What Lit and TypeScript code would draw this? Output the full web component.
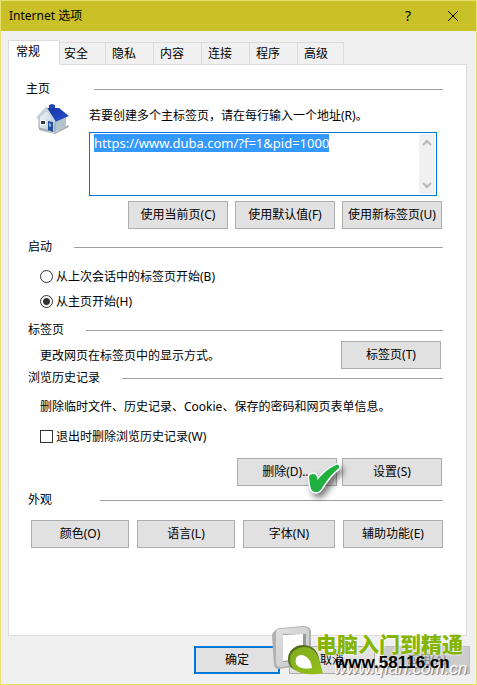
import { LitElement, html, css, svg } from "lit";
import { customElement, query } from "lit/decorators.js";

const TABS = ["常规", "安全", "隐私", "内容", "连接", "程序", "高级"];

const houseIcon = svg`
  <svg class="house" viewBox="0 0 34 32" aria-hidden="true">
    <defs>
      <linearGradient id="wall" x1="0" y1="0" x2="1" y2="1">
        <stop offset="0" stop-color="#f6fafd" /><stop offset="1" stop-color="#b4c6d2" />
      </linearGradient>
      <linearGradient id="roof" x1="0" y1="0" x2="1" y2="1">
        <stop offset="0" stop-color="#1636a4" /><stop offset="1" stop-color="#2450cc" />
      </linearGradient>
    </defs>
    <path d="M3 25l15 5 14-8 1 2-14 7L3 27z" fill="#a9adb0" />
    <path d="M17 18L30 13v11l-12 5z" fill="#b4c4ce" />
    <path d="M3 14l8-7 8 12v10L3 25z" fill="url(#wall)" stroke="#93a5b0" stroke-width="1" />
    <path d="M13 2l3-1 3 1v5h-6z" fill="#1d48b0" />
    <path d="M10 5l13 0 10 8-14 6z" fill="url(#roof)" />
    <path d="M1 15L10 5l9 14" fill="none" stroke="#c6d4de" stroke-width="2" />
    <path d="M4 17h6v5H4z" fill="#f4f8fa" />
    <path d="M5 18h4v3H5z" fill="#35393e" />
    <path d="M12 18l5 1v10l-5-2z" fill="#24529c" />
    <path d="M13 20l2 1v3l-2-1z" fill="#8fb5df" />
  </svg>`;

const tickIcon = svg`
  <svg class="tick" viewBox="0 0 44 44" aria-hidden="true">
    <path d="M5 20q0-3 5-3 3 0 3.500 6Q21 13 32 8q4-1 3 3Q26 18 18 31q-3 5-7 4-4 0-5-7z"
      fill="#1fb040" stroke="#fff" stroke-width="3" paint-order="stroke" stroke-linejoin="round" />
  </svg>`;

const logoIcon = svg`
  <svg class="logo" viewBox="0 0 54 52" aria-hidden="true">
    <defs>
      <linearGradient id="frame" x1="0" y1="0" x2="1" y2="1">
        <stop offset="0" stop-color="#e0e0e0" /><stop offset="1" stop-color="#c6c6c6" />
      </linearGradient>
      <linearGradient id="leaf" x1="0" y1="0" x2="1" y2="1">
        <stop offset="0" stop-color="#82aa22" /><stop offset="1" stop-color="#94c01a" />
      </linearGradient>
    </defs>
    <path fill="#b0b0b0" d="M4 4q1-2 5-2L31 0q7 0 8 5v29q0 4-5 5L7 43q-4 0-5-4L0 10q0-4 4-6z" />
    <path fill="url(#frame)" d="M7 3L31 1q6 0 6 5v28q0 4-4 4L9 41q-5 0-5-4V8q0-5 3-5z" />
    <path fill="#999" d="M11 8h23v26l-23 2z" />
    <path fill="#fff" d="M11 9l20-1v25l-20 2z" />
    <path fill="#536f1c" d="M16 33q0-9 9-13 9-3 16 2 5 4 6 11l3 13-27-2q-7-3-7-11z" />
    <path fill="url(#leaf)" d="M18 34q0-9 9-12 8-3 14 2 5 4 6 11l4 12q-7 2-15 1-17-1-18-14z" />
    <path fill="#fff" d="M24 32q3-5 9-2 6 3 7 12-6 1-10 0-8-2-6-10z" />
  </svg>`;

@customElement("app-root")
export class InternetOptions extends LitElement {
  @query("textarea") private address!: HTMLTextAreaElement;

  static styles = css`
    :host {
      display: block;
      font: 12px/16px "Noto Sans", "Noto Sans CJK SC", sans-serif;
      color: #000;
    }
    *, *::before, *::after { box-sizing: border-box; }
    button, textarea { font: inherit; color: inherit; margin: 0; }
    .dialog {
      min-height: 100vh;
      display: flex;
      flex-direction: column;
      background: #f0f0f0;
      border: 1px solid #e8e06c;
    }
    .titlebar {
      height: 30px;
      display: flex;
      align-items: center;
      background: #cac028;
      padding: 0 9px 0 8px;
      flex: none;
    }
    .title { flex: 1; margin: 0; font-size: 12px; font-weight: 400; }
    .caption {
      width: 28px;
      height: 28px;
      padding: 0;
      margin-left: 17px;
      border: 0;
      background: none;
      display: grid;
      place-items: center;
      font-size: 14px;
    }
    .caption svg { width: 12px; height: 12px; }
    .content { padding: 9px 9px 10px 7px; flex: 1; display: flex; flex-direction: column; }
    .tabs { display: flex; align-items: flex-end; height: 25px; margin-bottom: -1px; }
    .tab {
      height: 23px;
      width: 48px;
      padding: 0 0 0 6px;
      background: #f0f0f0;
      border: 1px solid #dcdcdc;
      border-left: 0;
      text-align: left;
    }
    .tab.active {
      width: 52px;
      height: 25px;
      background: #fff;
      border-left: 1px solid #dcdcdc;
      border-bottom-color: #fff;
      padding: 0 0 2px 7px;
      z-index: 1;
    }
    .tab.active + .tab, .tab:last-child { width: 46px; }
    .tab.active + .tab { padding-left: 4px; }
    .panel {
      flex: 1;
      background: #fff;
      border: 1px solid #dcdcdc;
      padding: 16px 23px 0 19px;
    }
    .legend { display: flex; align-items: center; gap: 22px; height: 16px; margin: 0; font-size: 12px; font-weight: 400; }
    .legend::after { content: ""; flex: 1; height: 1px; background: #a0a0a0; }
    .legend.wide { gap: 48px; }
    .legend.first { gap: 44px; margin-left: -2px; }
    .home { display: grid; grid-template-columns: 61px 1fr; margin: 6px 6px 0 0; }
    .house { width: 34px; height: 32px; margin-left: 8px; }
    .home label { display: block; height: 29px; padding-top: 5px; white-space: nowrap; }
    .editor { display: flex; height: 64px; border: 1px solid #0078d7; padding: 1px; }
    .editor textarea {
      flex: 1;
      min-width: 0;
      border: 0;
      outline: 0;
      padding: 1px 3px;
      resize: none;
      overflow: hidden;
      background: #fff;
      font-size: 13px;
      line-height: 17px;
    }
    .editor textarea::selection { background: #3399ff; color: #fff; }
    .scroller { width: 16px; background: #f0f0f0; display: flex; flex-direction: column; justify-content: space-between; }
    .scroller button { height: 18px; border: 0; padding: 0; background: none; display: grid; place-items: center; }
    .scroller svg { width: 10px; height: 8px; }
    .push {
      height: 28px;
      min-width: 100px;
      padding: 0;
      border: 1px solid #adadad;
      background: #e1e1e1;
      text-align: center;
      white-space: nowrap;
    }
    .buttons { display: flex; justify-content: flex-end; gap: 5px; padding-right: 1px; }
    .buttons.home-buttons { gap: 7px; margin: 5px 0 10px; }
    .option { display: flex; align-items: center; gap: 3px; height: 25px; padding-left: 12px; }
    .option input { appearance: none; width: 13px; height: 13px; margin: 0; border: 1px solid #333; background: #fff; }
    .option input[type="radio"] { border-radius: 50%; }
    .option input[type="radio"]:checked { background: radial-gradient(circle, #333 0 3px, #fff 4px); }
    .startup { padding: 9px 0 8px; }
    .tabrow { display: flex; justify-content: space-between; padding: 3px 2px 1px 12px; height: 32px; }
    .note { margin: 0; white-space: nowrap; }
    .tabrow .note { padding-top: 7px; }
    .history { padding: 13px 0 6px 0; }
    .history .note { padding-left: 12px; }
    .history .option { margin: 9px 0 9px; }
    .delete { position: relative; }
    .tick { position: absolute; left: 66px; top: -2px; width: 44px; height: 44px; filter: drop-shadow(3px 4px 3px #0008); z-index: 1; pointer-events: none; }
    .appearance { display: grid; grid-template-columns: 98fr 98fr 92fr 100fr; gap: 8px; padding: 12px 0 0 3px; }
    .appearance .push { min-width: 0; }
    .footer { display: flex; justify-content: flex-end; gap: 9px; padding-top: 10px; position: relative; margin-right: -3px; }
    .footer .push { width: 86px; min-width: 0; }
    .footer .ok { border: 2px solid #0078d7; }
    .footer .push:disabled { background: #ccc; border-color: #bfbfbf; color: #838383; }
    .watermark { position: absolute; right: 0; top: -10px; width: 198px; height: 58px; pointer-events: none; }
    .logo { position: absolute; left: 0; top: 0; width: 54px; height: 52px; }
    .brand, .site, .ghost { position: absolute; white-space: nowrap; }
    .brand {
      left: 44px;
      top: 5px;
      font: 900 21px/24px "Noto Sans CJK SC", sans-serif;
      color: #85b404;
      text-shadow: 0 0 2px #fff, 0 0 2px #fff;
    }
    .site { left: 63px; top: 27px; font: 700 17px/20px "Liberation Sans", sans-serif; }
    .ghost { left: 62px; top: 33px; font: italic 17px/20px "Liberation Sans", sans-serif; color: #fff; text-shadow: 1px 1px 1px #777; }
  `;

  firstUpdated() {
    this.address.focus();
    this.address.select();
  }

  private chevron(path: string) {
    return html`<svg viewBox="0 0 10 8" aria-hidden="true"><path d=${path} fill="none" stroke="#b8b8b8" stroke-width="2" /></svg>`;
  }

  render() {
    return html`
      <main class="dialog">
        <header class="titlebar">
          <h1 class="title">Internet 选项</h1>
          <button class="caption" aria-label="帮助">?</button>
          <button class="caption" aria-label="关闭">
            <svg viewBox="0 0 12 12"><path d="M1 1l10 10M11 1L1 11" stroke="#000" fill="none" /></svg>
          </button>
        </header>
        <div class="content">
          <div class="tabs" role="tablist">
            ${TABS.map((name, i) => html`
              <button class="tab ${i === 0 ? "active" : ""}" role="tab" aria-selected=${i === 0}>${name}</button>`)}
          </div>
          <div class="panel" role="tabpanel">
            <h2 class="legend first">主页</h2>
            <div class="home">
              ${houseIcon}
              <div>
                <label for="address">若要创建多个主标签页，请在每行输入一个地址(R)。</label>
                <div class="editor">
                  <textarea id="address" spellcheck="false" .value=${"https://www.duba.com/?f=1&pid=1000"}></textarea>
                  <div class="scroller">
                    <button aria-label="向上" tabindex="-1">${this.chevron("M1 6l4-4 4 4")}</button>
                    <button aria-label="向下" tabindex="-1">${this.chevron("M1 2l4 4 4-4")}</button>
                  </div>
                </div>
              </div>
            </div>
            <div class="buttons home-buttons">
              <button class="push">使用当前页(C)</button>
              <button class="push">使用默认值(F)</button>
              <button class="push">使用新标签页(U)</button>
            </div>

            <h2 class="legend">启动</h2>
            <div class="startup">
              <label class="option"><input type="radio" name="start" />从上次会话中的标签页开始(B)</label>
              <label class="option"><input type="radio" name="start" checked />从主页开始(H)</label>
            </div>

            <h2 class="legend">标签页</h2>
            <div class="tabrow">
              <p class="note">更改网页在标签页中的显示方式。</p>
              <button class="push">标签页(T)</button>
            </div>

            <h2 class="legend">浏览历史记录</h2>
            <div class="history">
              <p class="note">删除临时文件、历史记录、Cookie、保存的密码和网页表单信息。</p>
              <label class="option"><input type="checkbox" />退出时删除浏览历史记录(W)</label>
              <div class="buttons">
                <button class="push delete">删除(D)...${tickIcon}</button>
                <button class="push">设置(S)</button>
              </div>
            </div>

            <h2 class="legend wide">外观</h2>
            <div class="appearance">
              <button class="push">颜色(O)</button>
              <button class="push">语言(L)</button>
              <button class="push">字体(N)</button>
              <button class="push">辅助功能(E)</button>
            </div>
          </div>
          <footer class="footer">
            <button class="push ok">确定</button>
            <button class="push">取消</button>
            <button class="push" disabled>应用(A)</button>
            <div class="watermark">
              <span class="ghost">www.qfan.com.cn</span>
              ${logoIcon}
              <span class="brand">电脑入门到精通</span>
              <span class="site">www.58116.cn</span>
            </div>
          </footer>
        </div>
      </main>
    `;
  }
}
